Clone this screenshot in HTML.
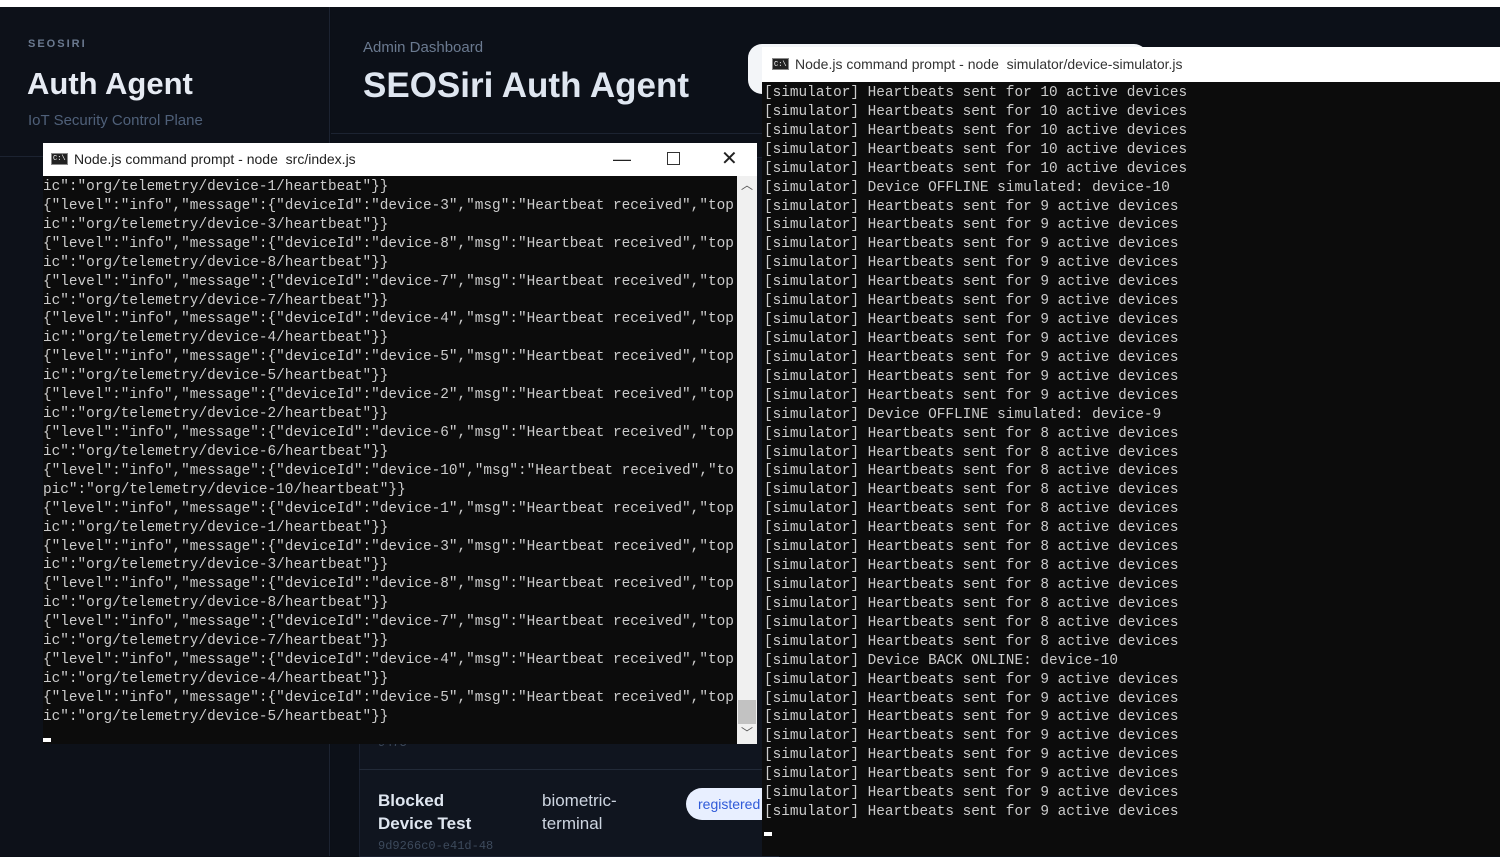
<!DOCTYPE html>
<html><head><meta charset="utf-8"><style>
*{margin:0;padding:0;box-sizing:border-box}
body{width:1500px;height:856px;overflow:hidden;background:#0b0f17;font-family:"Liberation Sans",sans-serif;position:relative}
.top{position:absolute;left:0;top:0;width:1500px;height:7px;background:#fff}
.side{position:absolute;left:0;top:7px;width:330px;height:849px;background:#0d1119;border-right:1px solid #1c2331}
.main{position:absolute;left:331px;top:7px;width:1169px;height:849px;background:#0c1018}
.abs{position:absolute}
.term{position:absolute;background:#0c0c0c;color:#cccccc;font-family:"Liberation Mono",monospace;font-size:14.4px;line-height:18.92px;white-space:pre;overflow:hidden;padding-top:2px}
.tb{position:absolute;background:#fff;color:#222;font-size:14px;line-height:33px}
.ico{display:inline-block;width:17px;height:12px;background:#222;border:1px solid #888;vertical-align:-1px;margin-right:6px;position:relative}
.ico:after{content:"C:\\";position:absolute;left:1px;top:-11px;font-size:7px;color:#fff;font-family:"Liberation Mono",monospace}
</style></head><body>
<div class="top"></div>
<div class="side">
 <div class="abs" style="left:28px;top:31px;font-size:11px;letter-spacing:2px;font-weight:bold;color:#6b7a90">SEOSIRI</div>
 <div class="abs" style="left:27px;top:59px;font-size:31px;font-weight:bold;color:#e6ebf3">Auth Agent</div>
 <div class="abs" style="left:28px;top:105px;font-size:15px;color:#4f6079">IoT Security Control Plane</div>
 <div class="abs" style="left:0;top:149px;width:330px;height:1px;background:#1c2331"></div>
</div>
<div class="main">
 <div class="abs" style="left:32px;top:32px;font-size:15px;color:#6b7a90">Admin Dashboard</div>
 <div class="abs" style="left:32px;top:59px;font-size:35px;font-weight:bold;color:#dfe6f0">SEOSiri Auth Agent</div>
 <div class="abs" style="left:0;top:126px;width:1169px;height:1px;background:#1c2331"></div>
 <div class="abs" style="left:28px;top:150px;width:420px;height:700px;background:#10151f;border:1px solid #1a2130"></div>
 <div class="abs" style="left:28px;top:762px;width:420px;height:1px;background:#222a38"></div>
 <div class="abs" style="left:47px;top:729px;font-family:'Liberation Mono',monospace;font-size:12px;color:#3d4a5c">9475</div>
 <div class="abs" style="left:47px;top:782px;font-size:17px;font-weight:bold;color:#dfe6f0;line-height:23px">Blocked<br>Device Test</div>
 <div class="abs" style="left:211px;top:782px;font-size:17px;color:#cdd5e0;line-height:23px">biometric-<br>terminal</div>
 <div class="abs" style="left:47px;top:832px;font-family:'Liberation Mono',monospace;font-size:12px;color:#3d4a5c">9d9266c0-e41d-48</div>
 <div class="abs" style="left:355px;top:781px;width:120px;height:32px;border-radius:16px;background:#e8efff;color:#2f5ad8;font-size:14px;line-height:32px;padding-left:12px">registered</div>
 <div class="abs" style="left:417px;top:37px;width:400px;height:50px;border-radius:14px;background:#f3f5f8"></div>
</div>

<div class="tb" style="left:43px;top:143px;width:714px;height:33px;padding-left:8px"><span class="ico"></span>Node.js command prompt - node&nbsp; src/index.js
 <span class="abs" style="left:570px;top:0;font-size:18px">—</span>
 <span class="abs" style="left:624px;top:9px;width:13px;height:13px;border:1px solid #333"></span>
 <span class="abs" style="left:678px;top:0;font-size:20px">✕</span>
</div>
<div class="term" style="left:43px;top:176px;width:714px;height:568px">ic":"org/telemetry/device-1/heartbeat"}}
{"level":"info","message":{"deviceId":"device-3","msg":"Heartbeat received","top
ic":"org/telemetry/device-3/heartbeat"}}
{"level":"info","message":{"deviceId":"device-8","msg":"Heartbeat received","top
ic":"org/telemetry/device-8/heartbeat"}}
{"level":"info","message":{"deviceId":"device-7","msg":"Heartbeat received","top
ic":"org/telemetry/device-7/heartbeat"}}
{"level":"info","message":{"deviceId":"device-4","msg":"Heartbeat received","top
ic":"org/telemetry/device-4/heartbeat"}}
{"level":"info","message":{"deviceId":"device-5","msg":"Heartbeat received","top
ic":"org/telemetry/device-5/heartbeat"}}
{"level":"info","message":{"deviceId":"device-2","msg":"Heartbeat received","top
ic":"org/telemetry/device-2/heartbeat"}}
{"level":"info","message":{"deviceId":"device-6","msg":"Heartbeat received","top
ic":"org/telemetry/device-6/heartbeat"}}
{"level":"info","message":{"deviceId":"device-10","msg":"Heartbeat received","to
pic":"org/telemetry/device-10/heartbeat"}}
{"level":"info","message":{"deviceId":"device-1","msg":"Heartbeat received","top
ic":"org/telemetry/device-1/heartbeat"}}
{"level":"info","message":{"deviceId":"device-3","msg":"Heartbeat received","top
ic":"org/telemetry/device-3/heartbeat"}}
{"level":"info","message":{"deviceId":"device-8","msg":"Heartbeat received","top
ic":"org/telemetry/device-8/heartbeat"}}
{"level":"info","message":{"deviceId":"device-7","msg":"Heartbeat received","top
ic":"org/telemetry/device-7/heartbeat"}}
{"level":"info","message":{"deviceId":"device-4","msg":"Heartbeat received","top
ic":"org/telemetry/device-4/heartbeat"}}
{"level":"info","message":{"deviceId":"device-5","msg":"Heartbeat received","top
ic":"org/telemetry/device-5/heartbeat"}}
 <div class="abs" style="left:0;top:562px;width:8px;height:4px;background:#fff"></div>
 <div class="abs" style="left:694px;top:0;width:20px;height:568px;background:#f0f0f0"></div>
 <div class="abs" style="left:695px;top:524px;width:18px;height:24px;background:#c2c2c2"></div>
 <div class="abs" style="left:698px;top:0;font-family:'Liberation Sans';font-size:12px;color:#555">︿</div>
 <div class="abs" style="left:698px;top:548px;font-family:'Liberation Sans';font-size:12px;color:#555">﹀</div>
</div>

<div class="tb" style="left:762px;top:47px;width:738px;height:35px;padding-left:10px;line-height:35px;color:#333"><span class="ico"></span>Node.js command prompt - node&nbsp; simulator/device-simulator.js</div>
<div class="term" style="left:762px;top:82px;width:738px;height:774px;padding-left:2px">[simulator] Heartbeats sent for 10 active devices
[simulator] Heartbeats sent for 10 active devices
[simulator] Heartbeats sent for 10 active devices
[simulator] Heartbeats sent for 10 active devices
[simulator] Heartbeats sent for 10 active devices
[simulator] Device OFFLINE simulated: device-10
[simulator] Heartbeats sent for 9 active devices
[simulator] Heartbeats sent for 9 active devices
[simulator] Heartbeats sent for 9 active devices
[simulator] Heartbeats sent for 9 active devices
[simulator] Heartbeats sent for 9 active devices
[simulator] Heartbeats sent for 9 active devices
[simulator] Heartbeats sent for 9 active devices
[simulator] Heartbeats sent for 9 active devices
[simulator] Heartbeats sent for 9 active devices
[simulator] Heartbeats sent for 9 active devices
[simulator] Heartbeats sent for 9 active devices
[simulator] Device OFFLINE simulated: device-9
[simulator] Heartbeats sent for 8 active devices
[simulator] Heartbeats sent for 8 active devices
[simulator] Heartbeats sent for 8 active devices
[simulator] Heartbeats sent for 8 active devices
[simulator] Heartbeats sent for 8 active devices
[simulator] Heartbeats sent for 8 active devices
[simulator] Heartbeats sent for 8 active devices
[simulator] Heartbeats sent for 8 active devices
[simulator] Heartbeats sent for 8 active devices
[simulator] Heartbeats sent for 8 active devices
[simulator] Heartbeats sent for 8 active devices
[simulator] Heartbeats sent for 8 active devices
[simulator] Device BACK ONLINE: device-10
[simulator] Heartbeats sent for 9 active devices
[simulator] Heartbeats sent for 9 active devices
[simulator] Heartbeats sent for 9 active devices
[simulator] Heartbeats sent for 9 active devices
[simulator] Heartbeats sent for 9 active devices
[simulator] Heartbeats sent for 9 active devices
[simulator] Heartbeats sent for 9 active devices
[simulator] Heartbeats sent for 9 active devices
 <div class="abs" style="left:2px;top:750px;width:8px;height:4px;background:#fff"></div></div>
</body></html>
